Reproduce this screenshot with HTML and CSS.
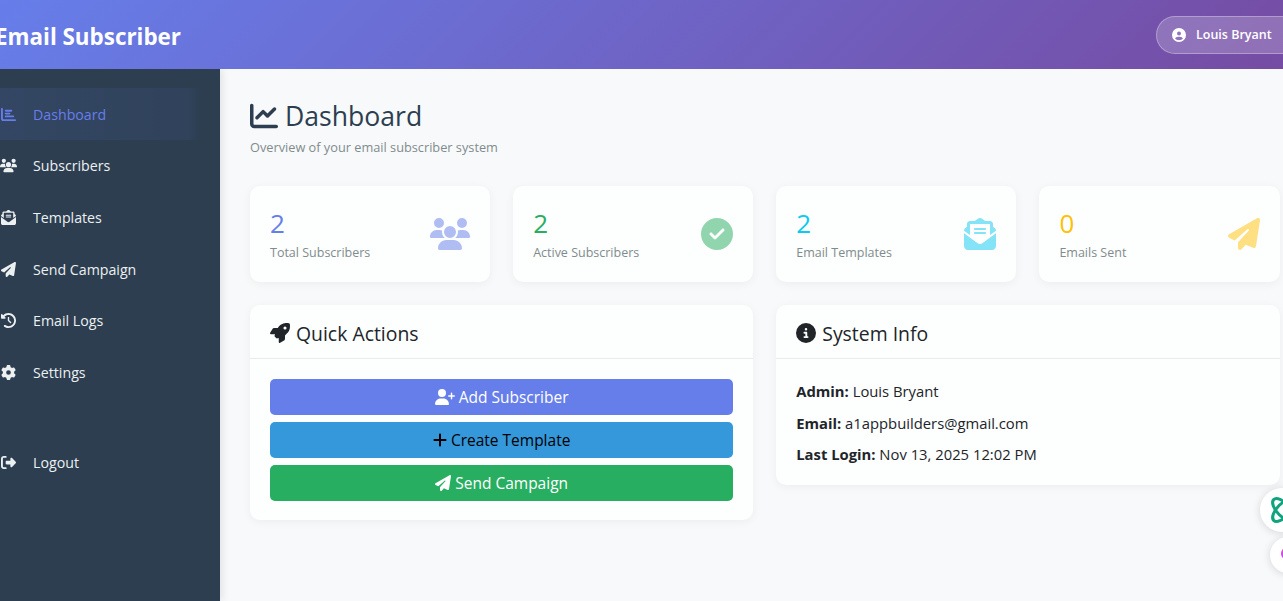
FILE: index.html
```html
<!DOCTYPE html>
<html lang="en">
<head>
    <meta charset="UTF-8">
    <meta name="viewport" content="width=device-width, initial-scale=1.0">
    <title>Email Subscriber - Dashboard</title>
    <link rel="stylesheet" href="styles.css">
</head>
<body>
    <svg class="icon-defs" xmlns="http://www.w3.org/2000/svg">
        <symbol id="i-bars" viewBox="0 0 512 512"><path d="M32 32c17.7 0 32 14.3 32 32V400c0 8.8 7.2 16 16 16H480c17.7 0 32 14.3 32 32s-14.3 32-32 32H80c-44.2 0-80-35.8-80-80V64C0 46.3 14.3 32 32 32zm96 96c0-17.7 14.3-32 32-32l192 0c17.7 0 32 14.3 32 32s-14.3 32-32 32l-192 0c-17.7 0-32-14.3-32-32zm32 64H288c17.7 0 32 14.3 32 32s-14.3 32-32 32H160c-17.7 0-32-14.3-32-32s14.3-32 32-32zm0 96H416c17.7 0 32 14.3 32 32s-14.3 32-32 32H160c-17.7 0-32-14.3-32-32s14.3-32 32-32z"/></symbol>
        <symbol id="i-line" viewBox="0 0 512 512"><path d="M64 64c0-17.7-14.3-32-32-32S0 46.3 0 64V400c0 44.2 35.8 80 80 80H480c17.7 0 32-14.3 32-32s-14.3-32-32-32H80c-8.8 0-16-7.2-16-16V64zm406.6 86.6c12.5-12.5 12.5-32.8 0-45.3s-32.8-12.5-45.3 0L320 210.7l-57.4-57.4c-12.5-12.5-32.8-12.5-45.3 0l-112 112c-12.5 12.5-12.5 32.8 0 45.3s32.8 12.5 45.3 0L240 221.3l57.4 57.4c12.5 12.5 32.8 12.5 45.3 0l128-128z"/></symbol>
        <symbol id="i-users" viewBox="0 0 640 512"><path d="M144 0a80 80 0 1 1 0 160A80 80 0 1 1 144 0zM512 0a80 80 0 1 1 0 160A80 80 0 1 1 512 0zM0 298.7C0 239.8 47.8 192 106.7 192h42.7c15.9 0 31 3.5 44.6 9.7c-1.3 7.2-1.9 14.7-1.9 22.3c0 38.2 16.8 72.5 43.3 96c-.2 0-.4 0-.7 0H21.3C9.6 320 0 310.4 0 298.7zM405.3 320c-.2 0-.4 0-.7 0c26.6-23.5 43.3-57.8 43.3-96c0-7.6-.7-15-1.9-22.3c13.6-6.3 28.7-9.7 44.6-9.7h42.7C592.2 192 640 239.8 640 298.7c0 11.8-9.6 21.3-21.3 21.3H405.3zM224 224a96 96 0 1 1 192 0 96 96 0 1 1 -192 0zM128 485.3C128 411.7 187.7 352 261.3 352H378.7C452.3 352 512 411.7 512 485.3c0 14.7-11.9 26.7-26.7 26.7H154.7c-14.7 0-26.7-11.9-26.7-26.7z"/></symbol>
        <symbol id="i-envelope" viewBox="0 0 512 512"><path d="M215.4 96H144 107.8 96v8.8V144v40.4 89L.2 202.5c1.6-18.1 10.9-34.9 25.7-45.8L48 140.3V96c0-26.5 21.5-48 48-48h76.6l49.9-36.9C232.2 3.9 243.9 0 256 0s23.8 3.9 33.5 11L339.4 48H416c26.5 0 48 21.5 48 48v44.3l22.1 16.4c14.8 10.9 24.1 27.7 25.7 45.8L416 273.4v-89V144 104.8 96H404.2 368 296.6 215.4zM0 448V242.1L217.6 403.3c11.1 8.2 24.6 12.7 38.4 12.7s27.3-4.4 38.4-12.7L512 242.1V448v0c0 35.3-28.7 64-64 64H64c-35.3 0-64-28.7-64-64v0zM176 160H336c8.8 0 16 7.2 16 16s-7.2 16-16 16H176c-8.8 0-16-7.2-16-16s7.2-16 16-16zm0 64H336c8.8 0 16 7.2 16 16s-7.2 16-16 16H176c-8.8 0-16-7.2-16-16s7.2-16 16-16z"/></symbol>
        <symbol id="i-plane" viewBox="0 0 512 512"><path d="M498.1 5.6c10.1 7 15.4 19.1 13.5 31.2l-64 416c-1.5 9.7-7.4 18.2-16 23s-18.9 5.4-28 1.6L284 427.7l-68.5 74.1c-8.9 9.7-22.9 12.9-35.2 8.1S160 493.2 160 480V396.4c0-4 1.5-7.8 4.2-10.7L331.8 202.8c5.8-6.3 5.6-16-.4-22s-15.7-6.4-22-.7L106 360.8 17.7 316.6C7.1 311.3 .3 300.7 0 288.9s5.9-22.8 16.1-28.7l448-256c10.7-6.1 23.9-5.5 34 1.4z"/></symbol>
        <symbol id="i-history" viewBox="0 0 512 512"><path d="M75 75L41 41C25.9 25.9 0 36.6 0 57.9V168c0 13.3 10.7 24 24 24H134.1c21.4 0 32.1-25.9 17-41l-30.8-30.8C155 85.5 203 64 256 64c106 0 192 86 192 192s-86 192-192 192c-40.8 0-78.6-12.7-109.7-34.4c-14.5-10.1-34.4-6.6-44.6 7.9s-6.6 34.4 7.9 44.6C151.2 495 201.7 512 256 512c141.4 0 256-114.6 256-256S397.4 0 256 0C185.3 0 121.3 28.7 75 75zm181 53c-13.3 0-24 10.7-24 24V256c0 6.4 2.5 12.5 7 17l72 72c9.4 9.4 24.6 9.4 33.9 0s9.4-24.6 0-33.9l-65-65V152c0-13.3-10.7-24-24-24z"/></symbol>
        <symbol id="i-gear" viewBox="0 0 512 512"><path d="M495.9 166.6c3.2 8.7 .5 18.4-6.4 24.6l-43.3 39.4c1.1 8.3 1.7 16.8 1.7 25.4s-.6 17.1-1.7 25.4l43.3 39.4c6.9 6.2 9.6 15.9 6.4 24.6c-4.4 11.9-9.7 23.3-15.8 34.3l-4.7 8.1c-6.6 11-14 21.4-22.1 31.2c-5.9 7.2-15.7 9.6-24.5 6.8l-55.7-17.7c-13.4 10.3-28.2 18.9-44 25.4l-12.5 57.1c-2 9.1-9 16.3-18.2 17.8c-13.8 2.3-28 3.5-42.5 3.5s-28.7-1.2-42.5-3.5c-9.2-1.5-16.2-8.7-18.2-17.8l-12.5-57.1c-15.8-6.5-30.6-15.1-44-25.4L83.1 425.9c-8.8 2.8-18.6 .3-24.5-6.8c-8.1-9.8-15.5-20.2-22.1-31.2l-4.7-8.1c-6.1-11-11.4-22.4-15.8-34.3c-3.2-8.7-.5-18.4 6.4-24.6l43.3-39.4C64.6 273.1 64 264.6 64 256s.6-17.1 1.7-25.4L22.4 191.2c-6.9-6.2-9.6-15.9-6.4-24.6c4.4-11.9 9.7-23.3 15.8-34.3l4.7-8.1c6.6-11 14-21.4 22.1-31.2c5.9-7.2 15.7-9.6 24.5-6.8l55.7 17.7c13.4-10.3 28.2-18.9 44-25.4l12.5-57.1c2-9.1 9-16.3 18.2-17.8C227.3 1.2 241.5 0 256 0s28.7 1.2 42.5 3.5c9.2 1.5 16.2 8.7 18.2 17.8l12.5 57.1c15.8 6.5 30.6 15.1 44 25.4l55.7-17.7c8.8-2.8 18.6-.3 24.5 6.8c8.1 9.8 15.5 20.2 22.1 31.2l4.7 8.1c6.1 11 11.4 22.4 15.8 34.3zM256 336a80 80 0 1 0 0-160 80 80 0 1 0 0 160z"/></symbol>
        <symbol id="i-logout" viewBox="0 0 512 512"><path d="M377.9 105.9L500.7 228.7c7.2 7.2 11.3 17.1 11.3 27.3s-4.1 20.1-11.3 27.3L377.9 406.1c-6.4 6.4-15 9.9-24 9.9c-18.7 0-33.9-15.2-33.9-33.9l0-62.1-128 0c-17.7 0-32-14.3-32-32l0-64c0-17.7 14.3-32 32-32l128 0 0-62.1c0-18.7 15.2-33.9 33.9-33.9c9 0 17.6 3.6 24 9.9zM160 96L96 96c-17.7 0-32 14.3-32 32l0 256c0 17.7 14.3 32 32 32l64 0c17.7 0 32 14.3 32 32s-14.3 32-32 32l-64 0c-53 0-96-43-96-96L0 128C0 75 43 32 96 32l64 0c17.7 0 32 14.3 32 32s-14.3 32-32 32z"/></symbol>
        <symbol id="i-rocket" viewBox="0 0 512 512"><path d="M156.6 384.9L125.7 354c-8.5-8.5-11.5-20.8-7.7-32.2c3-8.9 7-20.5 11.8-33.8L24 288c-8.6 0-16.6-4.6-20.9-12.1s-4.2-16.7 .2-24.1l52.5-88.5c13-21.9 36.5-35.3 61.9-35.3l82.3 0c2.4-4 4.8-7.7 7.2-11.3C289.1-4.1 411.1-8.1 483.9 5.3c11.6 2.1 20.6 11.2 22.8 22.8c13.4 72.9 9.3 194.8-111.4 276.7c-3.5 2.4-7.3 4.8-11.3 7.2v82.3c0 25.4-13.4 49-35.3 61.9l-88.5 52.5c-7.4 4.4-16.6 4.5-24.1 .2s-12.1-12.2-12.1-20.9V380.8c-14.1 4.9-26.4 8.9-35.7 11.9c-11.2 3.6-23.4 .5-31.8-7.8zM384 168a40 40 0 1 0 0-80 40 40 0 1 0 0 80z"/></symbol>
        <symbol id="i-user-plus" viewBox="0 0 640 512"><path d="M96 128a128 128 0 1 1 256 0A128 128 0 1 1 96 128zM0 482.3C0 383.8 79.8 304 178.3 304h91.4C368.2 304 448 383.8 448 482.3c0 16.4-13.3 29.7-29.7 29.7H29.7C13.3 512 0 498.7 0 482.3zM504 312V248H440c-13.3 0-24-10.7-24-24s10.7-24 24-24h64V136c0-13.3 10.7-24 24-24s24 10.7 24 24v64h64c13.3 0 24 10.7 24 24s-10.7 24-24 24H552v64c0 13.3-10.7 24-24 24s-24-10.7-24-24z"/></symbol>
        <symbol id="i-plus" viewBox="0 0 448 512"><path d="M256 80c0-17.7-14.3-32-32-32s-32 14.3-32 32V224H48c-17.7 0-32 14.3-32 32s14.3 32 32 32H192V432c0 17.7 14.3 32 32 32s32-14.3 32-32V288H400c17.7 0 32-14.3 32-32s-14.3-32-32-32H256V80z"/></symbol>
        <symbol id="i-user" viewBox="0 0 512 512"><path d="M399 384.2C376.9 345.8 335.4 320 288 320H224c-47.4 0-88.9 25.8-111 64.2c35.2 39.2 86.2 63.8 143 63.8s107.8-24.7 143-63.8zM0 256a256 256 0 1 1 512 0A256 256 0 1 1 0 256zm256 16a72 72 0 1 0 0-144 72 72 0 1 0 0 144z"/></symbol>
        <symbol id="i-check" viewBox="0 0 512 512"><path d="M256 512A256 256 0 1 0 256 0a256 256 0 1 0 0 512zM369 209L241 337c-9.4 9.4-24.6 9.4-33.9 0l-64-64c-9.4-9.4-9.4-24.6 0-33.9s24.6-9.4 33.9 0l47 47L335 175c9.4-9.4 24.6-9.4 33.9 0s9.4 24.6 0 33.9z"/></symbol>
        <symbol id="i-info" viewBox="0 0 512 512"><path d="M256 512A256 256 0 1 0 256 0a256 256 0 1 0 0 512zM216 336h24V272H216c-13.3 0-24-10.7-24-24s10.7-24 24-24h48c13.3 0 24 10.7 24 24v88h8c13.3 0 24 10.7 24 24s-10.7 24-24 24H216c-13.3 0-24-10.7-24-24s10.7-24 24-24zm40-208a32 32 0 1 1 0 64 32 32 0 1 1 0-64z"/></symbol>
    </svg>

    <header class="topbar">
        <div class="brand">Email Subscriber</div>
        <div class="user-pill">
            <svg class="icon icon-user"><use href="#i-user"/></svg>
            <span>Louis Bryant</span>
        </div>
    </header>

    <div class="layout">
        <aside class="sidebar">
            <a class="nav-item active"><svg class="icon"><use href="#i-bars"/></svg><span>Dashboard</span></a>
            <a class="nav-item"><svg class="icon"><use href="#i-users"/></svg><span>Subscribers</span></a>
            <a class="nav-item"><svg class="icon"><use href="#i-envelope"/></svg><span>Templates</span></a>
            <a class="nav-item"><svg class="icon"><use href="#i-plane"/></svg><span>Send Campaign</span></a>
            <a class="nav-item"><svg class="icon"><use href="#i-history"/></svg><span>Email Logs</span></a>
            <a class="nav-item"><svg class="icon"><use href="#i-gear"/></svg><span>Settings</span></a>
            <a class="nav-item logout"><svg class="icon"><use href="#i-logout"/></svg><span>Logout</span></a>
        </aside>

        <main class="content">
            <h1 class="page-title"><svg class="icon"><use href="#i-line"/></svg>Dashboard</h1>
            <p class="page-sub">Overview of your email subscriber system</p>

            <section class="stats">
                <div class="stat-card">
                    <div><div class="stat-num c-primary">2</div><div class="stat-label">Total Subscribers</div></div>
                    <svg class="stat-icon stat-icon-wide c-primary"><use href="#i-users"/></svg>
                </div>
                <div class="stat-card">
                    <div><div class="stat-num c-green">2</div><div class="stat-label">Active Subscribers</div></div>
                    <svg class="stat-icon c-green"><use href="#i-check"/></svg>
                </div>
                <div class="stat-card">
                    <div><div class="stat-num c-cyan">2</div><div class="stat-label">Email Templates</div></div>
                    <svg class="stat-icon c-cyan"><use href="#i-envelope"/></svg>
                </div>
                <div class="stat-card">
                    <div><div class="stat-num c-yellow">0</div><div class="stat-label">Emails Sent</div></div>
                    <svg class="stat-icon c-yellow"><use href="#i-plane"/></svg>
                </div>
            </section>

            <section class="panels">
                <div class="panel">
                    <h2 class="panel-head"><svg class="icon"><use href="#i-rocket"/></svg>Quick Actions</h2>
                    <div class="panel-body actions">
                        <button class="btn btn-primary"><svg class="icon icon-wide"><use href="#i-user-plus"/></svg>Add Subscriber</button>
                        <button class="btn btn-blue"><svg class="icon icon-narrow"><use href="#i-plus"/></svg>Create Template</button>
                        <button class="btn btn-green"><svg class="icon"><use href="#i-plane"/></svg>Send Campaign</button>
                    </div>
                </div>
                <div class="panel">
                    <h2 class="panel-head"><svg class="icon"><use href="#i-info"/></svg>System Info</h2>
                    <div class="panel-body info">
                        <p><strong>Admin:</strong> Louis Bryant</p>
                        <p><strong>Email:</strong> a1appbuilders@gmail.com</p>
                        <p><strong>Last Login:</strong> Nov 13, 2025 12:02 PM</p>
                    </div>
                </div>
            </section>
        </main>
    </div>

    <!-- floating browser extension buttons -->
    <div class="float-btn float-one">
        <svg class="float-icon" viewBox="0 0 24 24">
            <ellipse cx="12" cy="12" rx="11" ry="5" transform="rotate(45 12 12)"/>
            <ellipse cx="12" cy="12" rx="11" ry="5" transform="rotate(-45 12 12)"/>
        </svg>
    </div>
    <div class="float-btn float-two"><span class="float-dot"></span></div>
</body>
</html>
```

FILE: styles.css
```css
* {
    margin: 0;
    padding: 0;
    box-sizing: border-box;
}

html, body {
    height: 100%;
    overflow: hidden;
}

body {
    font-family: 'Open Sans', 'Noto Sans', sans-serif;
    background-color: #f8f9fa;
    color: #2c3e50;
}

.icon-defs {
    display: none;
}

.icon {
    fill: currentColor;
    flex-shrink: 0;
}

/* top bar */
.topbar {
    position: relative;
    z-index: 2;
    height: 69px;
    display: flex;
    align-items: center;
    justify-content: space-between;
    background: linear-gradient(135deg, #667eea 0%, #764ba2 100%);
    color: white;
    margin-left: -5px;
    margin-right: -20px;
}

.brand {
    font-size: 22.4px;
    font-weight: 700;
    margin-top: 3px;
}

.user-pill {
    display: flex;
    align-items: center;
    width: 147px;
    height: 38px;
    padding-left: 15px;
    gap: 10px;
    font-size: 12.5px;
    font-weight: 600;
    border-radius: 20px;
    background-color: rgba(255, 255, 255, 0.2);
    border: 1px solid rgba(255, 255, 255, 0.3);
}

.icon-user {
    width: 14px;
    height: 14px;
}

.layout {
    display: flex;
    height: calc(100vh - 69px);
}

/* sidebar */
.sidebar {
    width: 220px;
    flex-shrink: 0;
    background-color: #2c3e50;
    box-shadow: 2px 0 8px rgba(0, 0, 0, 0.1);
    padding-top: 19px;
    display: flex;
    flex-direction: column;
}

.nav-item {
    height: 51.6px;
    width: 200px;
    display: flex;
    align-items: center;
    gap: 16px;
    padding-top: 1px;
    color: #ecf0f1;
    font-size: 14.2px;
}

.nav-item .icon {
    width: 17px;
    height: 15px;
}

.nav-item.active {
    color: #667eea;
    background: linear-gradient(90deg, rgba(102, 126, 234, 0.12), rgba(102, 126, 234, 0.07) 95%, rgba(102, 126, 234, 0));
}

.nav-item.logout {
    margin-top: 39px;
}

/* main */
.content {
    flex: 1;
    min-width: 0;
    padding: 29px 3.5px 0 30px;
}

.page-title {
    display: flex;
    align-items: center;
    gap: 7px;
    font-size: 26.6px;
    font-weight: 400;
    line-height: 36px;
}

.page-title .icon {
    width: 28px;
    height: 28px;
}

.page-sub {
    font-size: 12.75px;
    color: #7f8c8d;
    margin-top: 4px;
    line-height: 18px;
}

.stats {
    display: grid;
    grid-template-columns: repeat(4, 1fr);
    gap: 23px;
    margin-top: 30px;
}

.stat-card {
    height: 96px;
    display: flex;
    align-items: center;
    justify-content: space-between;
    padding: 0 20px;
    background-color: #fdfefe;
    border-radius: 10px;
    box-shadow: 0 2px 10px rgba(0, 0, 0, 0.05);
}

.stat-num {
    font-size: 26px;
    font-weight: 500;
    line-height: 32px;
    margin-bottom: 5px;
}

.stat-label {
    font-size: 12.5px;
    color: #7f8c8d;
    line-height: 18px;
}

.stat-icon {
    width: 32px;
    height: 32px;
    fill: currentColor;
    opacity: 0.5;
}

.stat-icon-wide {
    width: 40px;
}

.c-primary { color: #667eea; }
.c-green { color: #27ae60; }
.c-cyan { color: #0dcaf0; }
.c-yellow { color: #ffc107; }

.panels {
    display: grid;
    grid-template-columns: 1fr 1fr;
    gap: 23px;
    margin-top: 23px;
    align-items: start;
}

.panel {
    background-color: #fdfefe;
    border-radius: 10px;
    box-shadow: 0 2px 10px rgba(0, 0, 0, 0.05);
}

.panel-head {
    height: 54px;
    display: flex;
    align-items: center;
    gap: 6px;
    padding: 3px 20px 0;
    font-size: 19.4px;
    font-weight: 400;
    color: #212529;
    border-bottom: 1px solid #e9ecef;
}

.panel-head .icon {
    width: 20px;
    height: 20px;
}

.panel-body {
    padding: 20px;
}

.actions {
    display: flex;
    flex-direction: column;
    gap: 7px;
    padding-bottom: 19px;
}

.btn {
    height: 36px;
    border: none;
    border-radius: 5px;
    font-family: inherit;
    font-size: 15.5px;
    font-weight: 500;
    display: flex;
    align-items: center;
    justify-content: center;
    gap: 4px;
    color: white;
}

.btn .icon {
    width: 16px;
    height: 16px;
}

.btn .icon-wide {
    width: 20px;
}

.btn .icon-narrow {
    width: 14px;
}

.btn-primary { background-color: #667eea; }
.btn-blue { background-color: #3498db; color: #000; }
.btn-green { background-color: #27ae60; }

.info {
    padding-top: 21px;
    padding-bottom: 20px;
    font-size: 14.8px;
    color: #212529;
    line-height: 22px;
}

.info p + p {
    margin-top: 9.5px;
}

/* floating buttons over the page */
.float-btn {
    position: fixed;
    border-radius: 50%;
    background-color: white;
    box-shadow: 0 1px 8px rgba(0, 0, 0, 0.15);
}

.float-one {
    left: 1260px;
    top: 488px;
    width: 44px;
    height: 44px;
    padding: 6px 0 0 8px;
}

.float-icon {
    display: block;
    width: 32px;
    height: 32px;
    fill: none;
    stroke: #10a37f;
    stroke-width: 2.3;
}

.float-two {
    left: 1270px;
    top: 537px;
    width: 36px;
    height: 36px;
}

.float-dot {
    position: absolute;
    left: 11px;
    top: 10px;
    width: 12px;
    height: 13px;
    border-radius: 50%;
    background: linear-gradient(180deg, #f08a40 0%, #c94be8 40%);
}
```
